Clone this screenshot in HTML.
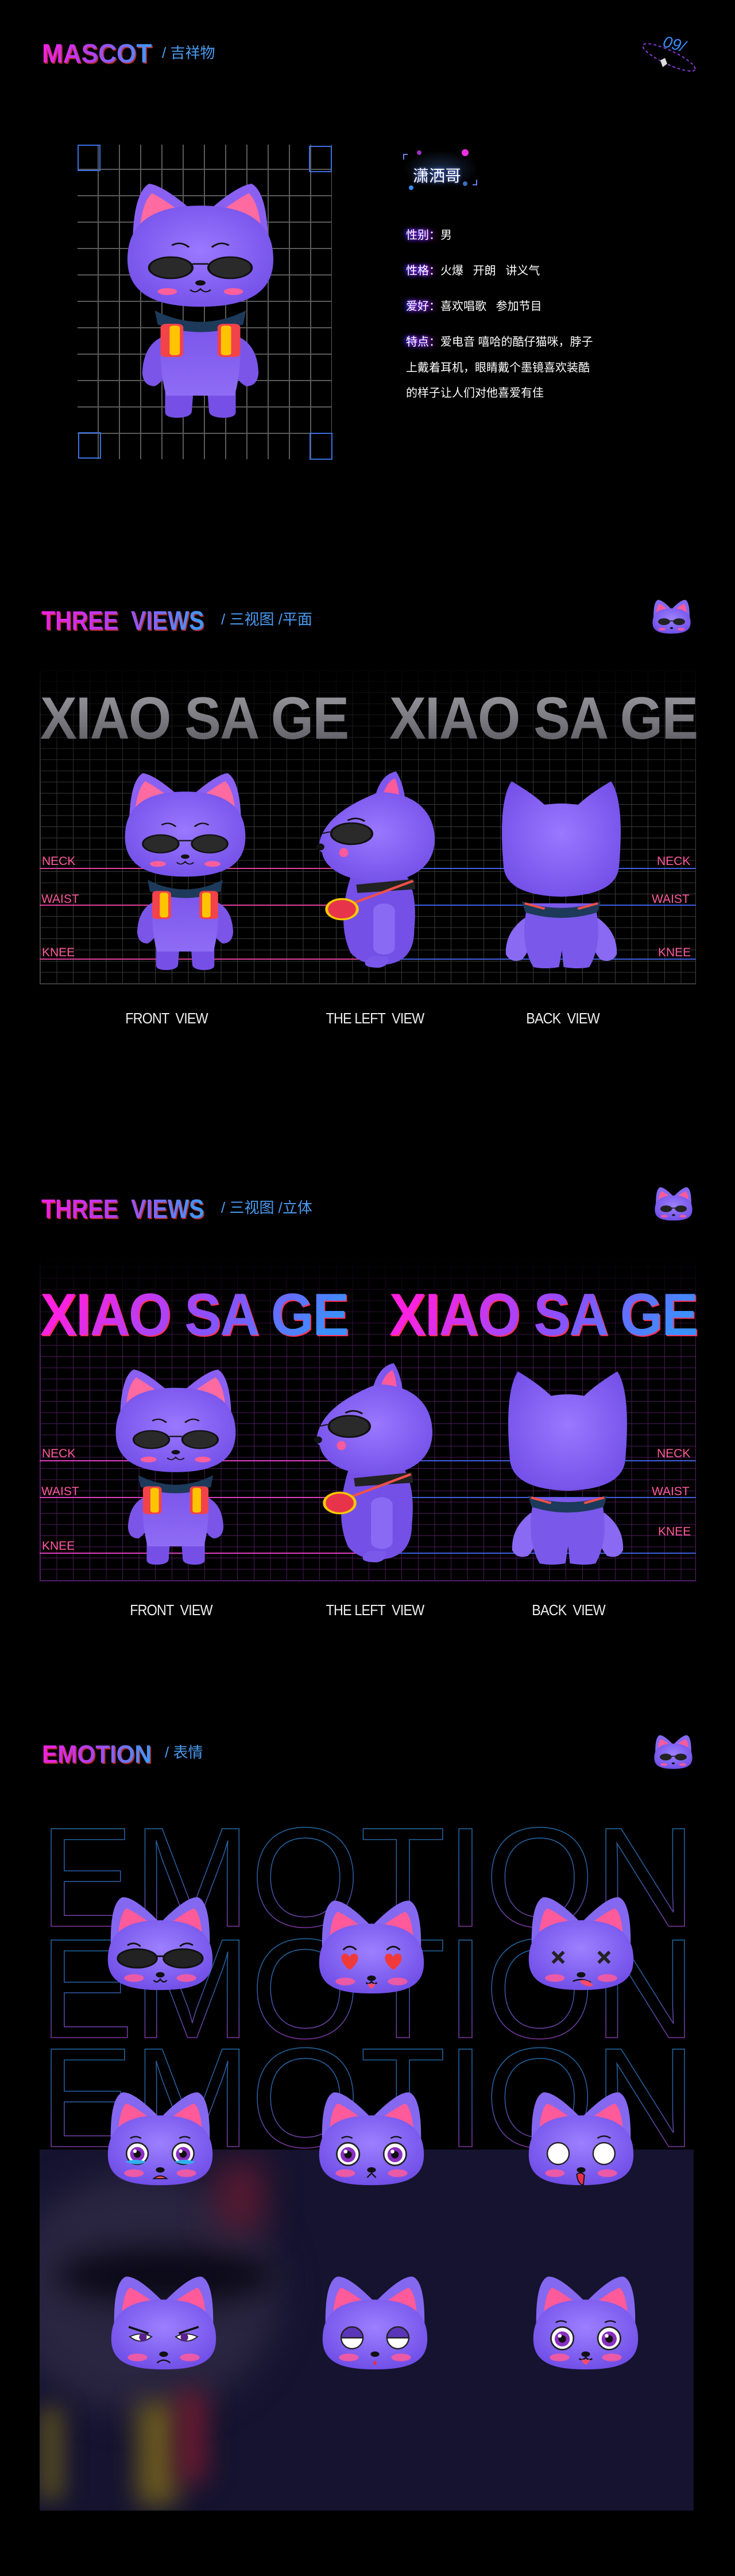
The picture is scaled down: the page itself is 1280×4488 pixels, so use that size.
<!DOCTYPE html>
<html><head><meta charset="utf-8">
<style>
*{margin:0;padding:0;box-sizing:border-box}
body{width:1280px;height:4488px;background:#000;position:relative;overflow:hidden;font-family:"Liberation Sans","Noto Sans CJK SC",sans-serif;color:#fff}
.abs{position:absolute}
.tt{position:absolute;font-weight:bold;white-space:nowrap;background:linear-gradient(90deg,#f020e0 0%,#b040f0 45%,#3a9cff 100%);-webkit-background-clip:text;background-clip:text;color:transparent;filter:drop-shadow(2px 2px 0 rgba(255,60,60,.7));transform-origin:left center;line-height:1}
.sub{position:absolute;color:#4a9af0;font-size:26px;white-space:nowrap;line-height:1}
.lbl{position:absolute;color:#ff5a9a;font-size:21px;line-height:1}
.cap{position:absolute;color:#eee;font-size:26px;white-space:nowrap;transform:translateX(-50%) scaleX(.9);letter-spacing:-1px}
.info{position:absolute;left:707px;font-size:20px;color:#fff;white-space:nowrap;line-height:1}
.info b{font-weight:normal;text-shadow:-4px 0 8px #3030ff,4px 0 8px #c020e0,0 0 6px #8a30ff}
.big{position:absolute;font-weight:bold;font-size:104px;line-height:1;white-space:nowrap;transform-origin:left top;transform:scaleX(.92);letter-spacing:-2px}
svg{position:absolute;overflow:visible}
</style></head><body>

<svg width="0" height="0" style="position:absolute">
<defs>
<linearGradient id="bodyG" x1="0" y1="0" x2="0" y2="1"><stop offset="0" stop-color="#7a55ea"/><stop offset="1" stop-color="#8f6cf5"/></linearGradient>
<radialGradient id="headG" cx=".5" cy=".45" r=".6"><stop offset="0" stop-color="#9a78ff"/><stop offset="1" stop-color="#7450e8"/></radialGradient>
<radialGradient id="hG" cx=".5" cy=".4" r=".65"><stop offset="0" stop-color="#9c80ff"/><stop offset="1" stop-color="#6e4ce6"/></radialGradient>
<symbol id="hd" viewBox="0 0 200 180">
<path d="M10,120 Q5,20 30,8 Q50,5 95,50 Z" fill="#8468f0"/>
<path d="M22,112 Q22,40 38,28 Q55,35 85,58 Z" fill="#ff5a9a"/>
<path d="M190,120 Q195,20 170,8 Q150,5 105,50 Z" fill="#8468f0"/>
<path d="M178,112 Q178,40 162,28 Q145,35 115,58 Z" fill="#ff5a9a"/>
<path d="M100,50 C165,50 196,75 196,122 C196,166 160,178 100,178 C40,178 4,166 4,122 C4,75 35,50 100,50 Z" fill="url(#hG)"/>
<ellipse cx="52" cy="156" rx="18" ry="7" fill="#ff5a9a" opacity=".85"/>
<ellipse cx="148" cy="156" rx="18" ry="7" fill="#ff5a9a" opacity=".85"/>
<ellipse cx="100" cy="150" rx="8" ry="5" fill="#111"/>
</symbol>
<symbol id="eye" viewBox="0 0 40 40"><circle cx="20" cy="20" r="18" fill="#fff" stroke="#222" stroke-width="2.5"/><circle cx="20" cy="21" r="12" fill="#8a2fc0"/><circle cx="20" cy="21" r="6" fill="#111"/><circle cx="16" cy="16" r="3" fill="#fff"/></symbol>
<symbol id="catF" viewBox="0 0 260 620">
<path d="M70,400 Q30,420 28,500 Q30,535 50,535 Q70,520 75,470 Z" fill="#7a55e8"/>
<path d="M190,400 Q230,420 232,500 Q230,535 210,535 Q190,520 185,470 Z" fill="#7a55e8"/>
<path d="M68,520 L68,605 Q70,620 95,618 Q115,615 115,600 L118,540 Z" fill="#7650e6"/>
<path d="M192,520 L192,605 Q190,620 165,618 Q145,615 145,600 L142,540 Z" fill="#7650e6"/>
<path d="M62,370 Q55,480 70,560 L190,560 Q205,480 198,370 Z" fill="url(#bodyG)"/>
<path d="M50,335 Q130,395 210,335 L205,372 Q130,412 55,372 Z" fill="#1d3a5a"/>
<path d="M12,240 Q5,30 40,0 Q65,5 115,70 Z" fill="#8a60f2"/>
<path d="M22,200 Q20,60 45,25 Q70,45 100,80 Z" fill="#ff6aa0"/>
<path d="M248,240 Q255,30 220,0 Q195,5 145,70 Z" fill="#8a60f2"/>
<path d="M238,200 Q240,60 215,25 Q190,45 160,80 Z" fill="#ff6aa0"/>
<path d="M130,58 C210,58 258,100 258,200 C258,290 210,325 130,325 C50,325 2,290 2,200 C2,100 50,58 130,58 Z" fill="url(#headG)"/>
<path d="M80,163 Q95,150 110,168" stroke="#111" stroke-width="4" fill="none"/>
<path d="M180,163 Q165,150 150,168" stroke="#111" stroke-width="4" fill="none"/>
<ellipse cx="78" cy="222" rx="38" ry="28" fill="#2a2a2a" stroke="#111" stroke-width="4"/>
<ellipse cx="182" cy="222" rx="38" ry="28" fill="#2a2a2a" stroke="#111" stroke-width="4"/>
<path d="M116,212 L144,212" stroke="#111" stroke-width="4"/>
<ellipse cx="130" cy="262" rx="9" ry="7" fill="#111"/>
<path d="M112,280 Q121,292 130,278 Q139,292 148,280" stroke="#111" stroke-width="3" fill="none"/>
<ellipse cx="72" cy="285" rx="17" ry="9" fill="#ff5f9a"/>
<ellipse cx="188" cy="285" rx="17" ry="9" fill="#ff5f9a"/>
<rect x="60" y="370" width="40" height="88" rx="10" fill="#f2424a"/><rect x="76" y="375" width="18" height="78" rx="6" fill="#ffc400"/>
<rect x="160" y="370" width="40" height="88" rx="10" fill="#f2424a"/><rect x="166" y="375" width="18" height="78" rx="6" fill="#ffc400"/>
</symbol>
<symbol id="catS" viewBox="0 0 210 520">
<path d="M60,280 Q35,400 60,480 Q80,515 120,512 Q172,505 172,420 Q178,330 160,280 Z" fill="#7450e6"/>
<path d="M95,490 Q70,520 110,520 Q130,515 125,490 Z" fill="#7a58ea"/>
<rect x="100" y="350" width="38" height="135" rx="19" fill="#8a6af2"/>
<path d="M98,110 Q105,10 140,0 Q158,40 158,125 Z" fill="#7e58ee"/>
<path d="M112,100 Q118,30 138,18 Q148,50 146,110 Z" fill="#ff5a9a"/>
<path d="M110,55 C175,55 208,110 208,180 C208,250 170,292 110,292 C55,292 15,260 10,215 Q0,205 5,190 Q15,110 110,55 Z" fill="url(#headG)"/>
<path d="M55,130 Q70,118 85,132" stroke="#111" stroke-width="4" fill="none"/>
<ellipse cx="62" cy="165" rx="36" ry="28" fill="#2a2a2a" stroke="#111" stroke-width="4"/>
<path d="M24,160 L8,165" stroke="#111" stroke-width="3"/>
<ellipse cx="7" cy="200" rx="7" ry="9" fill="#111"/>
<ellipse cx="48" cy="215" rx="8" ry="12" fill="#ff5a9a"/>
<path d="M70,300 L172,285 L174,312 L72,322 Z" fill="#222"/>
<path d="M170,290 L45,360" stroke="#f0504a" stroke-width="6"/>
<circle cx="45" cy="365" r="27" fill="#e8344a" stroke="#f5c800" stroke-width="5"/>
</symbol>
<symbol id="catB" viewBox="0 0 218 520">
<path d="M45,380 Q10,420 12,480 Q20,505 40,495 Q55,470 60,420 Z" fill="#8a6af2"/>
<path d="M173,380 Q208,420 206,480 Q198,505 178,495 Q163,470 158,420 Z" fill="#8a6af2"/>
<path d="M50,340 Q35,450 60,515 Q80,522 105,515 L110,470 L113,515 Q140,522 158,515 Q183,450 168,340 Z" fill="#7a58ea"/>
<path d="M40,335 Q109,370 178,335 L172,365 Q109,395 46,365 Z" fill="#1d3a5a"/>
<path d="M45,340 L80,355 M173,340 L138,355" stroke="#f0504a" stroke-width="6"/>
<path d="M8,240 Q-2,60 22,5 Q60,40 80,70 Q109,62 138,70 Q158,40 196,5 Q220,60 210,240 Q205,318 109,322 Q13,318 8,240 Z" fill="url(#headG)"/>
</symbol>
<symbol id="logo" viewBox="0 0 200 180">
<use href="#hd" width="200" height="180"/>
<ellipse cx="62" cy="118" rx="30" ry="17" fill="#222"/><ellipse cx="138" cy="118" rx="30" ry="17" fill="#222"/><path d="M90,114 L110,114" stroke="#111" stroke-width="4"/>
</symbol>
</defs>
</svg>

<!-- SECTION 1 -->
<div class="tt" style="left:73px;top:70px;font-size:46px;transform:scaleX(.96)">MASCOT</div>
<div class="sub" style="left:282px;top:79px;">/ 吉祥物</div>
<svg style="left:1110px;top:55px" width="110" height="80" viewBox="0 0 110 80">
<ellipse cx="55" cy="45" rx="50" ry="12" transform="rotate(25 55 45)" fill="none" stroke="#8a3ae0" stroke-width="2" stroke-dasharray="5 4"/>
<text x="45" y="30" font-family="Liberation Sans" font-style="italic" font-size="28" fill="#3a8cff" transform="rotate(15 60 20)">09/</text>
<path d="M40,50 L48,46 L52,56 L44,62 Z" fill="#ddd"/>
</svg>

<div class="abs" style="left:135px;top:252px;width:443px;height:548px;background-image:repeating-linear-gradient(90deg,transparent 0 35px,#5a5a5a 35px 37px),repeating-linear-gradient(0deg,transparent 0 44px,#5a5a5a 44px 46px);"></div>
<div class="abs" style="left:135px;top:252px;width:40px;height:46px;border:2px solid #3a70e0;"></div>
<div class="abs" style="left:538px;top:254px;width:40px;height:46px;border:2px solid #3a70e0;"></div>
<div class="abs" style="left:136px;top:753px;width:40px;height:46px;border:2px solid #3a70e0;"></div>
<div class="abs" style="left:539px;top:754px;width:40px;height:47px;border:2px solid #3a70e0;"></div>
<svg style="left:220px;top:320px" width="258" height="409" viewBox="0 0 260 620" preserveAspectRatio="none"><use href="#catF" width="260" height="620"/></svg>

<div class="abs" style="left:702px;top:262px;width:131px;height:66px;background:radial-gradient(ellipse at center,#1a2a45 0%,#000 70%)"></div>
<div class="abs" style="left:702px;top:268px;width:8px;height:10px;border-top:2px solid #6a80f0;border-left:2px solid #6a80f0"></div>
<div class="abs" style="left:823px;top:313px;width:8px;height:10px;border-bottom:2px solid #6a80f0;border-right:2px solid #6a80f0"></div>
<div class="abs" style="left:726px;top:262px;width:8px;height:8px;border-radius:50%;background:#a030c0"></div>
<div class="abs" style="left:804px;top:260px;width:12px;height:12px;border-radius:50%;background:#f030e0"></div>
<div class="abs" style="left:712px;top:323px;width:8px;height:8px;border-radius:50%;background:#3a8cff"></div>
<div class="abs" style="left:806px;top:316px;width:8px;height:8px;border-radius:50%;background:#3a70c0"></div>
<div class="abs" style="left:719px;top:285px;font-size:28px;color:#fff;text-shadow:0 0 6px #6080ff">潇洒哥</div>

<div class="info" style="top:400px"><b>性别：</b>男</div>
<div class="info" style="top:462px"><b>性格：</b>火爆&nbsp;&nbsp;&nbsp;开朗&nbsp;&nbsp;&nbsp;讲义气</div>
<div class="info" style="top:524px"><b>爱好：</b>喜欢唱歌&nbsp;&nbsp;&nbsp;参加节目</div>
<div class="info" style="top:586px"><b>特点：</b>爱电音 嘻哈的酷仔猫咪，脖子</div>
<div class="info" style="top:631px">上戴着耳机，眼睛戴个墨镜喜欢装酷</div>
<div class="info" style="top:675px">的样子让人们对他喜爱有佳</div>

<!-- SECTION 2 -->
<div class="tt" style="left:72px;top:1058px;font-size:46px;transform:scaleX(.86)">THREE&nbsp;&nbsp;VIEWS</div>
<div class="sub" style="left:385px;top:1066px;">/ 三视图 /平面</div>
<svg style="left:1135px;top:1041px" width="69" height="65" viewBox="0 0 200 180"><use href="#logo" width="200" height="180"/></svg>

<div class="abs" style="left:69px;top:1168px;width:1143px;height:547px;background-image:repeating-linear-gradient(90deg,#3a3a3a 0 1px,transparent 1px 28.6px),repeating-linear-gradient(0deg,#3a3a3a 0 1px,transparent 1px 19.5px);border:1px solid #444;-webkit-mask-image:linear-gradient(180deg,rgba(0,0,0,.1),#000 40%);mask-image:linear-gradient(180deg,rgba(0,0,0,.1),#000 40%)"></div>
<div class="big" style="left:70px;top:1200px;background:linear-gradient(180deg,#9a9aa0,#5a5a60);-webkit-background-clip:text;background-clip:text;color:transparent">XIAO SA GE</div>
<div class="big" style="left:678px;top:1200px;background:linear-gradient(180deg,#9a9aa0,#5a5a60);-webkit-background-clip:text;background-clip:text;color:transparent">XIAO SA GE</div>
<div class="abs" style="left:69px;top:1512px;width:1143px;height:2px;background:linear-gradient(90deg,#e0409a 50%,#4060e0 50%)"></div>
<div class="abs" style="left:69px;top:1576px;width:1143px;height:2px;background:linear-gradient(90deg,#e0409a 50%,#4060e0 50%)"></div>
<div class="abs" style="left:69px;top:1670px;width:1143px;height:2px;background:linear-gradient(90deg,#e0409a 50%,#4060e0 50%)"></div>
<div class="lbl" style="left:73px;top:1490px">NECK</div><div class="lbl" style="left:72px;top:1556px">WAIST</div><div class="lbl" style="left:73px;top:1649px">KNEE</div>
<div class="lbl" style="left:1144px;top:1490px">NECK</div><div class="lbl" style="left:1135px;top:1556px">WAIST</div><div class="lbl" style="left:1146px;top:1649px">KNEE</div>
<svg style="left:216px;top:1347px" width="213" height="344" viewBox="0 0 260 620" preserveAspectRatio="none"><use href="#catF" width="260" height="620"/></svg>
<svg style="left:551px;top:1344px" width="208" height="342" viewBox="0 0 210 520" preserveAspectRatio="none"><use href="#catS" width="210" height="520"/></svg>
<svg style="left:869px;top:1358px" width="217" height="330" viewBox="0 0 218 520" preserveAspectRatio="none"><use href="#catB" width="218" height="520"/></svg>
<div class="cap" style="left:290px;top:1759px">FRONT&nbsp;&nbsp;VIEW</div>
<div class="cap" style="left:653px;top:1759px">THE LEFT&nbsp;&nbsp;VIEW</div>
<div class="cap" style="left:980px;top:1759px">BACK&nbsp;&nbsp;VIEW</div>

<!-- SECTION 3 -->
<div class="tt" style="left:72px;top:2083px;font-size:46px;transform:scaleX(.86)">THREE&nbsp;&nbsp;VIEWS</div>
<div class="sub" style="left:385px;top:2091px;">/ 三视图 /立体</div>
<svg style="left:1139px;top:2064px" width="68" height="65" viewBox="0 0 200 180"><use href="#logo" width="200" height="180"/></svg>

<div class="abs" style="left:69px;top:2196px;width:1143px;height:559px;background-image:repeating-linear-gradient(90deg,#4a1a5a 0 1px,transparent 1px 28.6px),repeating-linear-gradient(0deg,#4a1a5a 0 1px,transparent 1px 19.5px);border:1px solid #5a2070;-webkit-mask-image:linear-gradient(180deg,rgba(0,0,0,.05),#000 30%);mask-image:linear-gradient(180deg,rgba(0,0,0,.05),#000 30%)"></div>
<div class="big" style="left:70px;top:2239px;background:linear-gradient(135deg,#ff20e0 10%,#8a50ff 55%,#3a90ff 90%);-webkit-background-clip:text;background-clip:text;color:transparent;filter:drop-shadow(2px 2px 0 #ff3050)">XIAO SA GE</div>
<div class="big" style="left:678px;top:2239px;background:linear-gradient(135deg,#ff20e0 10%,#8a50ff 55%,#3a90ff 90%);-webkit-background-clip:text;background-clip:text;color:transparent;filter:drop-shadow(2px 2px 0 #ff3050)">XIAO SA GE</div>
<div class="abs" style="left:69px;top:2544px;width:1143px;height:2px;background:linear-gradient(90deg,#e040c0 50%,#4060e0 50%)"></div>
<div class="abs" style="left:69px;top:2608px;width:1143px;height:2px;background:linear-gradient(90deg,#e040c0 50%,#4060e0 50%)"></div>
<div class="abs" style="left:69px;top:2705px;width:1143px;height:2px;background:linear-gradient(90deg,#e040c0 50%,#4060e0 50%)"></div>
<div class="lbl" style="left:73px;top:2522px">NECK</div><div class="lbl" style="left:72px;top:2588px">WAIST</div><div class="lbl" style="left:73px;top:2683px">KNEE</div>
<div class="lbl" style="left:1144px;top:2522px">NECK</div><div class="lbl" style="left:1135px;top:2588px">WAIST</div><div class="lbl" style="left:1146px;top:2658px">KNEE</div>
<svg style="left:200px;top:2386px" width="212" height="341" viewBox="0 0 260 620" preserveAspectRatio="none"><use href="#catF" width="260" height="620"/></svg>
<svg style="left:547px;top:2375px" width="208" height="347" viewBox="0 0 210 520" preserveAspectRatio="none"><use href="#catS" width="210" height="520"/></svg>
<svg style="left:880px;top:2386px" width="217" height="341" viewBox="0 0 218 520" preserveAspectRatio="none"><use href="#catB" width="218" height="520"/></svg>
<div class="cap" style="left:298px;top:2790px">FRONT&nbsp;&nbsp;VIEW</div>
<div class="cap" style="left:653px;top:2790px">THE LEFT&nbsp;&nbsp;VIEW</div>
<div class="cap" style="left:990px;top:2790px">BACK&nbsp;&nbsp;VIEW</div>

<!-- SECTION 4 -->
<div class="tt" style="left:73px;top:3035px;font-size:44px;transform:scaleX(.93)">EMOTION</div>
<div class="sub" style="left:287px;top:3040px;">/ 表情</div>
<svg style="left:1138px;top:3019px" width="69" height="65" viewBox="0 0 200 180"><use href="#logo" width="200" height="180"/></svg>

<div class="abs" style="left:69px;top:3745px;width:1139px;height:629px;background:#15132f;overflow:hidden">
<div class="abs" style="left:-60px;top:40px;width:480px;height:420px;border-radius:50%;background:#2a2540;filter:blur(30px)"></div>
<div class="abs" style="left:30px;top:170px;width:380px;height:100px;border-radius:50%;background:#0c0a18;filter:blur(25px)"></div>
<div class="abs" style="left:310px;top:20px;width:80px;height:120px;background:#5a1a30;filter:blur(30px)"></div>
<div class="abs" style="left:170px;top:440px;width:70px;height:180px;background:#6a5a20;filter:blur(22px)"></div>
<div class="abs" style="left:240px;top:420px;width:50px;height:160px;background:#6a1a30;filter:blur(22px)"></div>
<div class="abs" style="left:0px;top:450px;width:40px;height:160px;background:#5a5020;filter:blur(20px)"></div>
</div>

<svg style="left:69px;top:3140px" width="1143" height="610" viewBox="0 0 1143 610">
<defs><linearGradient id="og" x1="0" y1="0" x2="0" y2="1"><stop offset="0" stop-color="#1a6a9a"/><stop offset=".5" stop-color="#2a5aa0"/><stop offset="1" stop-color="#b020a0"/></linearGradient></defs>
<g font-family="Liberation Sans" font-size="247" fill="none" stroke="url(#og)" stroke-width="1.6">
<text x="0" y="216" textLength="1143" lengthAdjust="spacingAndGlyphs">EMOTION</text>
<text x="0" y="410" textLength="1143" lengthAdjust="spacingAndGlyphs">EMOTION</text>
<text x="0" y="600" textLength="1143" lengthAdjust="spacingAndGlyphs">EMOTION</text>
</g>
</svg>

<!-- heads row1 -->
<svg style="left:184px;top:3296px" width="190" height="175" viewBox="0 0 200 180"><use href="#hd" width="200" height="180"/>
<path d="M40,96 Q52,88 64,98 M136,98 Q148,88 160,96" stroke="#111" stroke-width="3" fill="none"/>
<ellipse cx="58" cy="120" rx="36" ry="17" fill="#222" stroke="#111" stroke-width="3"/><ellipse cx="142" cy="120" rx="36" ry="17" fill="#222" stroke="#111" stroke-width="3"/><path d="M92,116 L108,116" stroke="#111" stroke-width="3"/>
<path d="M88,160 Q94,167 100,158 Q106,167 112,160" stroke="#111" stroke-width="2.5" fill="none"/></svg>
<svg style="left:552px;top:3302px" width="190" height="175" viewBox="0 0 200 180"><use href="#hd" width="200" height="180"/>
<path d="M48,98 Q60,86 72,98 M128,98 Q140,86 152,98" stroke="#111" stroke-width="3" fill="none"/>
<path d="M60,135 C40,120 42,105 52,105 C57,105 60,110 60,112 C60,110 63,105 68,105 C78,105 80,120 60,135 Z" fill="#f03a3a"/>
<path d="M140,135 C120,120 122,105 132,105 C137,105 140,110 140,112 C140,110 143,105 148,105 C158,105 160,120 140,135 Z" fill="#f03a3a"/>
<path d="M90,158 Q95,163 100,156 Q105,163 110,158" stroke="#111" stroke-width="2.5" fill="none"/><path d="M93,160 Q100,178 107,160 Z" fill="#ff4a6a"/></svg>
<svg style="left:917px;top:3296px" width="190" height="175" viewBox="0 0 200 180"><use href="#hd" width="200" height="180"/>
<path d="M48,108 L68,128 M68,108 L48,128 M132,108 L152,128 M152,108 L132,128" stroke="#222" stroke-width="6"/>
<path d="M85,162 Q100,155 118,164" stroke="#111" stroke-width="2.5" fill="none"/><path d="M98,160 Q115,158 122,170 Q112,174 100,165 Z" fill="#ff4a6a"/></svg>

<!-- row2 -->
<svg style="left:184px;top:3636px" width="190" height="175" viewBox="0 0 200 180"><use href="#hd" width="200" height="180"/>
<path d="M45,92 Q55,86 65,92 M135,92 Q145,86 155,92" stroke="#111" stroke-width="2.5" fill="none"/>
<use href="#eye" x="36" y="98" width="44" height="44"/><use href="#eye" x="120" y="98" width="44" height="44"/>
<path d="M36,135 Q55,128 74,135 Q60,144 36,135 Z M126,135 Q145,128 164,135 Q150,144 126,135 Z" fill="#30b0f0"/>
<path d="M88,166 Q100,156 112,166 Z" fill="#ff5050" stroke="#111" stroke-width="2"/></svg>
<svg style="left:552px;top:3636px" width="190" height="175" viewBox="0 0 200 180"><use href="#hd" width="200" height="180"/>
<path d="M45,92 Q55,86 65,92 M135,92 Q145,86 155,92" stroke="#111" stroke-width="2.5" fill="none"/>
<use href="#eye" x="34" y="98" width="46" height="46"/><use href="#eye" x="120" y="98" width="46" height="46"/>
<path d="M92,164 L100,156 L108,164" stroke="#111" stroke-width="2.5" fill="none"/></svg>
<svg style="left:917px;top:3636px" width="190" height="175" viewBox="0 0 200 180"><use href="#hd" width="200" height="180"/>
<path d="M130,92 Q142,84 154,92" stroke="#111" stroke-width="2.5" fill="none"/>
<circle cx="58" cy="120" r="20" fill="#fff" stroke="#222" stroke-width="2.5"/><circle cx="142" cy="120" r="20" fill="#fff" stroke="#222" stroke-width="2.5"/>
<path d="M92,158 Q100,152 106,160 L104,178 Q94,176 92,158 Z" fill="#e8304a" stroke="#111" stroke-width="2"/></svg>

<!-- row3 -->
<svg style="left:190px;top:3957px" width="190" height="175" viewBox="0 0 200 180"><use href="#hd" width="200" height="180"/>
<path d="M36,100 L72,112 M164,100 L128,112" stroke="#111" stroke-width="4"/>
<path d="M38,118 Q58,108 78,118 Q58,134 38,118 Z" fill="#fff" stroke="#222" stroke-width="2"/><circle cx="62" cy="119" r="7" fill="#5a2090"/>
<path d="M122,118 Q142,108 162,118 Q142,134 122,118 Z" fill="#fff" stroke="#222" stroke-width="2"/><circle cx="138" cy="119" r="7" fill="#5a2090"/>
<path d="M88,166 Q100,156 112,166" stroke="#111" stroke-width="2.5" fill="none"/></svg>
<svg style="left:558px;top:3957px" width="190" height="175" viewBox="0 0 200 180"><use href="#hd" width="200" height="180"/>
<circle cx="58" cy="120" r="20" fill="#fff" stroke="#222" stroke-width="2.5"/><circle cx="142" cy="120" r="20" fill="#fff" stroke="#222" stroke-width="2.5"/>
<path d="M38,120 A20,20 0 0 1 78,120 Z" fill="#5a35b8" stroke="#222" stroke-width="2.5"/><path d="M122,120 A20,20 0 0 1 162,120 Z" fill="#5a35b8" stroke="#222" stroke-width="2.5"/>
<ellipse cx="100" cy="166" rx="3" ry="4" fill="#e03050"/></svg>
<svg style="left:925px;top:3957px" width="190" height="175" viewBox="0 0 200 180"><use href="#hd" width="200" height="180"/>
<path d="M45,92 Q55,86 65,92 M135,92 Q145,86 155,92" stroke="#111" stroke-width="2.5" fill="none"/>
<use href="#eye" x="34" y="98" width="46" height="46"/><use href="#eye" x="120" y="98" width="46" height="46"/>
<path d="M88,158 Q94,163 100,156 Q106,163 112,158" stroke="#111" stroke-width="2.5" fill="none"/><path d="M92,160 Q100,178 108,160 Z" fill="#ff4a6a"/></svg>

</body></html>
